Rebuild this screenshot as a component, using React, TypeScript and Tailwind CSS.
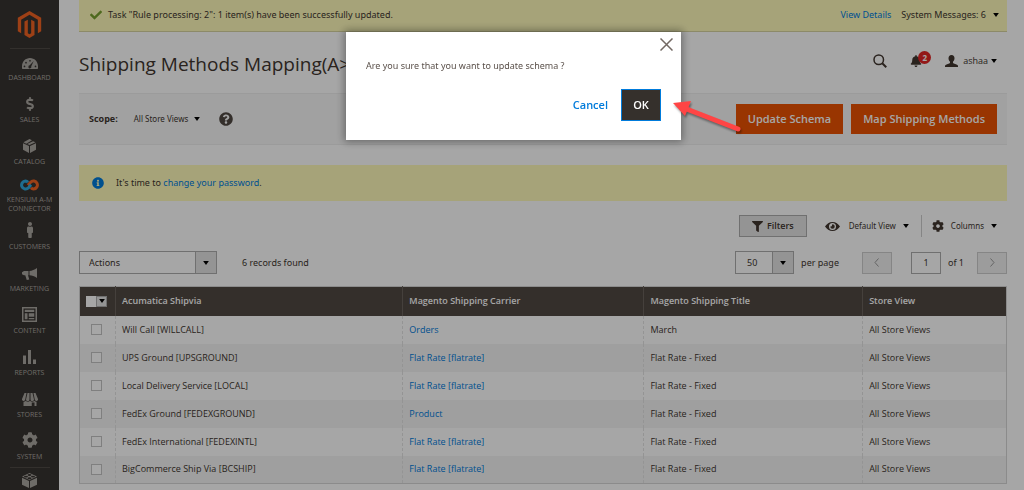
import type { ReactNode } from "react";
import {
  FaMagento,
  FaDollarSign,
  FaMale,
  FaCog,
  FaCheck,
  FaInfoCircle,
  FaQuestionCircle,
  FaBell,
  FaFilter,
} from "react-icons/fa";

const DashboardIcon = () => (
  <svg viewBox="0 0 32 22" className="h-[11px] w-4" fill="currentColor" aria-hidden="true">
    <path
      fillRule="evenodd"
      d="M16 0C7.200 0 0 7.200 0 16v4.500C0 21.500.5 22 1.500 22h29c1 0 1.500-.5 1.500-1.500V16C32 7.200 24.800 0 16 0zM5 18.500a1.700 1.700 0 1 1 0-3.400 1.700 1.700 0 0 1 0 3.400zm3-7.500a1.700 1.700 0 1 1 0-3.400 1.700 1.700 0 0 1 0 3.400zm8-3.800a1.700 1.700 0 1 1 0-3.400 1.700 1.700 0 0 1 0 3.400zm7.500-1.200-5 10.500a3 3 0 1 1-3-1.800zM27 18.500a1.700 1.700 0 1 1 0-3.400 1.700 1.700 0 0 1 0 3.400z"
    />
  </svg>
);

const BoxIcon = () => (
  <svg viewBox="0 0 26 28" className="h-[14px] w-[13px]" fill="currentColor" aria-hidden="true">
    <path d="M0 8.500 12 13.800V28L0 21.500zM26 8.500 14 13.800V28l12-6.500zM13 12.200 8.500 10.200 20 4.300l5 2.300zM6.500 9.300 1 6.600 13 0l5 2.700z" />
  </svg>
);

const ConnectorIcon = () => (
  <svg viewBox="0 0 38 24" className="h-3 w-[19px]" fill="none" strokeWidth="6" aria-hidden="true">
    <path d="M22 17.500c1.500 1.800 3.300 2.500 5 2.500a8 8 0 1 0-6-13.500L16 12.500" stroke="#f26322" />
    <path d="M16 6.500C14.500 4.700 12.700 4 11 4a8 8 0 1 0 6 13.500L22 11.500" stroke="#2fa8dc" />
  </svg>
);

const MegaphoneIcon = () => (
  <svg viewBox="0 0 30 24" className="h-3 w-[15px]" fill="currentColor" aria-hidden="true">
    <path d="M30 0v20c-5-3.500-10-5-15-5.400V6C20 5.500 25 3.500 30 0zM13 6v8.600h-1l2.500 8.400-5 1-3-9.400H4L0 12.500V8.500L4 6z" />
  </svg>
);

const ContentIcon = () => (
  <svg viewBox="0 0 30 30" className="size-[15px]" fill="currentColor" aria-hidden="true">
    <path fillRule="evenodd" d="M0 0h30v30H0zM3 3v24h24V3zM5.500 5.500h19v4.500h-19zM5.500 12.500h5.500v12H5.500zM13.500 12.500h11v7h-11zM13.500 22h11v2.500h-11z" />
  </svg>
);

const ReportsIcon = () => (
  <svg viewBox="0 0 26 28" className="h-[14px] w-[13px]" fill="currentColor" aria-hidden="true">
    <path d="M0 11h6v17H0zM10 0h6v28h-6zM20 19h6v9h-6z" />
  </svg>
);

const StoreIcon = () => (
  <svg viewBox="0 0 32 26" className="h-[13px] w-4" fill="currentColor" aria-hidden="true">
    <path d="M5 0h4L6.500 13a3.200 3.200 0 0 1-6.500-1zM11 0h4v13a3.400 3.400 0 0 1-7 0zM17 0h4l3 13a3.400 3.400 0 0 1-7 0zM23 0h4l5 12a3.200 3.200 0 0 1-6.500 1z" />
    <path fillRule="evenodd" d="M3 17.500c2 0 3.500-.8 4.500-2 2 2.400 6.500 2.400 8.500 0 2 2.400 6.500 2.400 8.500 0 1 1.200 2.500 2 4.500 2V26H3zM19.500 19v7H25v-7z" />
  </svg>
);

const BlocksIcon = () => (
  <svg viewBox="0 0 30 30" className="size-[15px]" fill="currentColor" aria-hidden="true">
    <path d="M0 9.500 14 16v14L0 23.500zM30 9.500 16 16v14l14-6.500z" />
    <path fillRule="evenodd" d="M15 0 30 7.200 15 14.200 0 7.200zM15 2.200a4 1.800 0 1 0 0 3.600 4 1.800 0 0 0 0-3.600zM8 5.400a4 1.800 0 1 0 0 3.600 4 1.800 0 0 0 0-3.600zM22 5.400a4 1.800 0 1 0 0 3.600 4 1.800 0 0 0 0-3.600zM15 8.700a4 1.800 0 1 0 0 3.600 4 1.800 0 0 0 0-3.600z" />
  </svg>
);

const SearchIcon = () => (
  <svg viewBox="0 0 28 28" className="size-[14px]" fill="none" stroke="currentColor" aria-hidden="true">
    <circle cx="11.500" cy="11.500" r="9.500" strokeWidth="3" />
    <path d="m18.500 18.500 8 8" strokeWidth="4" />
  </svg>
);

const UserIcon = () => (
  <svg viewBox="0 0 26 24" className="h-3 w-[13px]" fill="currentColor" aria-hidden="true">
    <path d="M13 0c4 0 6 2.500 6 6.500 0 3-1.200 5.500-3 7v2c0 1 1 1.500 3 2.200 4 1.300 7 2 7 4.300v2H0v-2c0-2.300 3-3 7-4.300 2-.7 3-1.200 3-2.200v-2c-1.800-1.500-3-4-3-7C7 2.500 9 0 13 0z" />
  </svg>
);

const EyeIcon = () => (
  <svg viewBox="0 0 30 18" className="h-[9px] w-[15px]" fill="currentColor" aria-hidden="true">
    <path fillRule="evenodd" d="M15 0c6.500 0 11.500 3.500 15 9-3.500 5.500-8.500 9-15 9S3.500 14.500 0 9C3.500 3.500 8.500 0 15 0zm0 2a7 7 0 1 0 0 14 7 7 0 0 0 0-14zm0 2.500a4.500 4.500 0 1 1-4.500 4.500c1.800.8 4-1 3.500-3.500z" />
  </svg>
);

const Caret = () => (
  <svg viewBox="0 0 10 7" className="h-1 w-[6px] shrink-0 text-black" fill="currentColor" aria-hidden="true">
    <path d="M0 0h10L5 7z" />
  </svg>
);

const Chevron = ({ flip = false }: { flip?: boolean }) => (
  <svg viewBox="0 0 10 18" className={flip ? "h-[9px] w-[5px] rotate-180" : "h-[9px] w-[5px]"} fill="none" stroke="currentColor" strokeWidth="2" aria-hidden="true">
    <path d="M9 1 2 9l7 8" />
  </svg>
);

const menu: { label: string; icon: ReactNode }[] = [
  { label: "Dashboard", icon: <DashboardIcon /> },
  { label: "Sales", icon: <FaDollarSign className="size-[14px]" /> },
  { label: "Catalog", icon: <BoxIcon /> },
  { label: "Kensium A-M Connector", icon: <ConnectorIcon /> },
  { label: "Customers", icon: <FaMale className="size-4" /> },
  { label: "Marketing", icon: <MegaphoneIcon /> },
  { label: "Content", icon: <ContentIcon /> },
  { label: "Reports", icon: <ReportsIcon /> },
  { label: "Stores", icon: <StoreIcon /> },
  { label: "System", icon: <FaCog className="size-4" /> },
];

const rows = [
  ["Will Call [WILLCALL]", "Orders", "March"],
  ["UPS Ground [UPSGROUND]", "Flat Rate [flatrate]", "Flat Rate - Fixed"],
  ["Local Delivery Service [LOCAL]", "Flat Rate [flatrate]", "Flat Rate - Fixed"],
  ["FedEx Ground [FEDEXGROUND]", "Product", "Flat Rate - Fixed"],
  ["FedEx International [FEDEXINTL]", "Flat Rate [flatrate]", "Flat Rate - Fixed"],
  ["BigCommerce Ship Via [BCSHIP]", "Flat Rate [flatrate]", "Flat Rate - Fixed"],
];

function Sidebar() {
  return (
    <nav className="flex w-[59px] shrink-0 flex-col items-center bg-[#373330] text-[#aaa6a0]">
      <a href="#home" aria-label="Home" className="flex h-12 w-full items-center justify-center">
        <FaMagento className="size-[27px] text-[#f26322]" />
      </a>
      <div className="h-px w-10 bg-[#4f4a45]" />
      <ul className="flex w-full flex-col gap-[9px]">
        {menu.map((m) => {
          const long = m.label.length > 12;
          return (
            <li key={m.label} className={long ? "-mb-1" : undefined}>
              <a href={"#" + m.label.toLowerCase().replaceAll(" ", "-")} className="flex flex-col items-center text-center text-[7px] leading-[9px] uppercase">
                <span className={(long ? "h-[18px]" : "h-[22px]") + " mb-[2px] flex items-end pb-[2px]"}>{m.icon}</span>
                <span className="px-1">{m.label}</span>
              </a>
            </li>
          );
        })}
      </ul>
      <div className="mt-[6px] h-px w-10 bg-[#4f4a45]" />
      <a href="#partners" aria-label="Partners" className="mt-[5px]">
        <BlocksIcon />
      </a>
    </nav>
  );
}

function SystemMessages() {
  return (
    <div className="flex h-8 items-center border-b border-[#d8d5a0] bg-[#fffbbb] pr-2 pb-[2px] pl-[11px] font-['Noto_Sans','Open_Sans',sans-serif] text-[9px]">
      <FaCheck className="mr-[6px] size-3 text-[#79a22e]" />
      <span>Task "Rule processing: 2": 1 item(s) have been successfully updated.</span>
      <a href="#details" className="ml-auto text-[#007bdb]">View Details</a>
      <button type="button" className="ml-[10px] flex items-center gap-[7px]">
        System Messages: 6 <Caret />
      </button>
    </div>
  );
}

function Header() {
  return (
    <header className="flex h-[61px] items-center pr-[10px]">
      <h1 className="pt-[2px] text-[19px] leading-7">Shipping Methods Mapping(A&gt;</h1>
      <div className="ml-auto flex items-center pb-[3px]">
        <button type="button" aria-label="Search" className="mr-[23px]">
          <SearchIcon />
        </button>
        <button type="button" aria-label="Notifications" className="relative mr-[23px]">
          <FaBell className="size-3" />
          <span className="absolute -top-1 left-2 flex size-[13px] items-center justify-center rounded-full bg-[#e22626] text-[8px] font-bold text-white">2</span>
        </button>
        <button type="button" className="flex items-center text-[9px]">
          <UserIcon />
          <span className="mr-[3px] ml-[5px]">ashaa</span>
          <Caret />
        </button>
      </div>
    </header>
  );
}

function PageActions() {
  const action = "h-[30px] bg-[#eb5202] px-3 text-[11px] font-semibold text-white";
  return (
    <div className="flex h-[52px] items-center border-y border-[#efefef] bg-[#f8f8f8] px-[10px]">
      <span className="text-[9px] font-bold">Scope:</span>
      <button type="button" className="ml-4 flex items-center gap-[6px] font-['Noto_Sans','Open_Sans',sans-serif] text-[8px]">
        All Store Views <Caret />
      </button>
      <button type="button" aria-label="Help" className="ml-[19px]">
        <FaQuestionCircle className="size-[14px] text-[#514943]" />
      </button>
      <div className="ml-auto flex gap-2">
        <button type="button" className={action}>Update Schema</button>
        <button type="button" className={action}>Map Shipping Methods</button>
      </div>
    </div>
  );
}

function GridControls() {
  return (
    <div className="font-['Noto_Sans','Open_Sans',sans-serif]">
      <div className="mt-[14px] flex h-[22px] items-center justify-end pr-[10px] text-[8px]">
        <button type="button" className="flex h-[22px] items-center gap-1 border border-[#adadad] bg-[#e3e3e3] px-3 font-['Open_Sans',sans-serif] text-[9px] font-semibold">
          <FaFilter className="size-[11px]" />
          Filters
        </button>
        <button type="button" className="ml-[18px] flex items-center">
          <EyeIcon />
          <span className="mr-[7px] ml-[9px]">Default View</span>
          <Caret />
        </button>
        <span className="mr-[10px] ml-3 h-full w-px bg-[#cccccc]" />
        <button type="button" className="flex items-center">
          <FaCog className="size-3" />
          <span className="mx-[7px]">Columns</span>
          <Caret />
        </button>
      </div>
      <div className="mt-[14px] mb-3 flex h-[23px] items-center text-[9px]">
        <div className="relative flex h-full w-[138px]">
          <select aria-label="Actions" className="h-full w-full appearance-none border border-[#adadad] bg-white pl-[9px]">
            <option>Actions</option>
          </select>
          <span className="pointer-events-none absolute inset-y-0 right-0 flex w-[22px] items-center justify-center border border-[#adadad] bg-[#e3e3e3]">
            <Caret />
          </span>
        </div>
        <span className="ml-[25px]">6 records found</span>
        <div className="ml-auto flex h-full items-center">
          <div className="relative flex h-full w-[59px]">
            <select id="page-size" className="h-full w-full appearance-none border border-[#adadad] bg-white pl-[11px]">
              <option>50</option>
            </select>
            <span className="pointer-events-none absolute inset-y-0 right-0 flex w-[22px] items-center justify-center border border-[#adadad] bg-[#e3e3e3]">
              <Caret />
            </span>
          </div>
          <label htmlFor="page-size" className="ml-[7px]">per page</label>
          <button type="button" aria-label="Previous page" className="ml-[23px] flex h-[22px] w-[30px] items-center justify-center border border-[#cccccc] bg-[#f0f0f0] text-[#999]">
            <Chevron />
          </button>
          <input aria-label="Page" defaultValue="1" className="ml-[19px] h-[22px] w-[30px] border border-[#adadad] bg-white text-center" />
          <span className="ml-[7px]">of 1</span>
          <button type="button" aria-label="Next page" className="ml-[13px] flex h-[22px] w-[30px] items-center justify-center border border-[#cccccc] bg-[#f0f0f0] text-[#999]">
            <Chevron flip />
          </button>
        </div>
      </div>
    </div>
  );
}

function MethodsTable() {
  const head = "border-l border-[#6b635c] px-[6px] text-left font-semibold";
  const cell = "border-l border-dashed border-[#e3e3e3] px-[6px]";
  return (
    <table className="w-full table-fixed border border-[#d6d6d6] text-[9px] leading-3">
      <thead>
        <tr className="h-[29px] bg-[#514943] text-white">
          <th className="w-9 pl-[6px]">
            <span className="flex h-[11px] w-[21px] bg-white">
              <input type="checkbox" aria-label="Select all" className="h-full w-[10px] appearance-none bg-white" />
              <button type="button" aria-label="Selection options" className="flex h-full flex-1 items-center justify-center border border-[#adadad] bg-[#e3e3e3]">
                <Caret />
              </button>
            </span>
          </th>
          <th className={head + " w-[31%]"}>Acumatica Shipvia</th>
          <th className={head + " w-[26%]"}>Magento Shipping Carrier</th>
          <th className={head + " w-[23.6%]"}>Magento Shipping Title</th>
          <th className={head}>Store View</th>
        </tr>
      </thead>
      <tbody>
        {rows.map(([name, carrier, title]) => (
          <tr key={name} className="h-7 even:bg-[#f5f5f5]">
            <td className="pl-[11px]">
              <input type="checkbox" aria-label={"Select " + name} className="block size-[11px] appearance-none border border-[#c4c4c4] bg-white" />
            </td>
            <td className={cell}>{name}</td>
            <td className={cell}>
              <a href="#edit" className="text-[#007bdb]">{carrier}</a>
            </td>
            <td className={cell}>{title}</td>
            <td className={cell}>All Store Views</td>
          </tr>
        ))}
      </tbody>
    </table>
  );
}

function ConfirmDialog() {
  return (
    <div className="fixed inset-0 flex items-start justify-center bg-black/35 pt-8 pl-[3px]">
      <div role="dialog" aria-modal="true" aria-labelledby="confirm-text" className="relative flex w-[335px] flex-col bg-white px-5 pt-7 pb-[19px] shadow-[0_0_8px_2px_rgba(0,0,0,0.35)]">
        <button type="button" aria-label="Close" className="absolute top-[6px] right-2 text-[#736963]">
          <svg viewBox="0 0 26 26" className="size-[13px]" fill="none" stroke="currentColor" strokeWidth="3" aria-hidden="true">
            <path d="m1 1 24 24M25 1 1 25" />
          </svg>
        </button>
        <p id="confirm-text" className="mb-[17px] font-['Noto_Sans','Open_Sans',sans-serif] text-[9px] leading-3 text-[#5a504a]">
          Are you sure that you want to update schema ?
        </p>
        <div className="flex items-center justify-end gap-[13px] text-[11px] font-semibold">
          <button type="button" className="text-[#007bdb]">Cancel</button>
          <button type="button" className="h-8 w-10 border border-[#007bdb] bg-[#35302c] text-white">OK</button>
        </div>
        <svg viewBox="0 0 72 34" className="pointer-events-none absolute top-[68px] left-full -ml-2 h-[34px] w-[72px] drop-shadow-[1px_2px_1px_rgba(0,0,0,0.4)]" aria-hidden="true">
          <path d="M11 8 65 29" stroke="#ff4545" strokeWidth="5" strokeLinecap="round" />
          <path d="M0 3 18 1 12 16z" fill="#ff4545" />
        </svg>
      </div>
    </div>
  );
}

export default function App() {
  return (
    <div className="flex min-h-screen bg-white font-['Open_Sans','Noto_Sans',sans-serif] text-[#41362f]">
      <Sidebar />
      <main className="min-w-0 flex-1 pr-[17px] pl-5">
        <SystemMessages />
        <Header />
        <PageActions />
        <div className="mt-5 flex h-9 items-center bg-[#fffbbb] px-[13px] font-['Noto_Sans','Open_Sans',sans-serif] text-[9px]">
          <FaInfoCircle className="mr-3 size-3 text-[#007bdb]" />
          <p>
            It's time to <a href="#password" className="text-[#007bdb]">change your password</a>.
          </p>
        </div>
        <GridControls />
        <MethodsTable />
      </main>
      <ConfirmDialog />
    </div>
  );
}
